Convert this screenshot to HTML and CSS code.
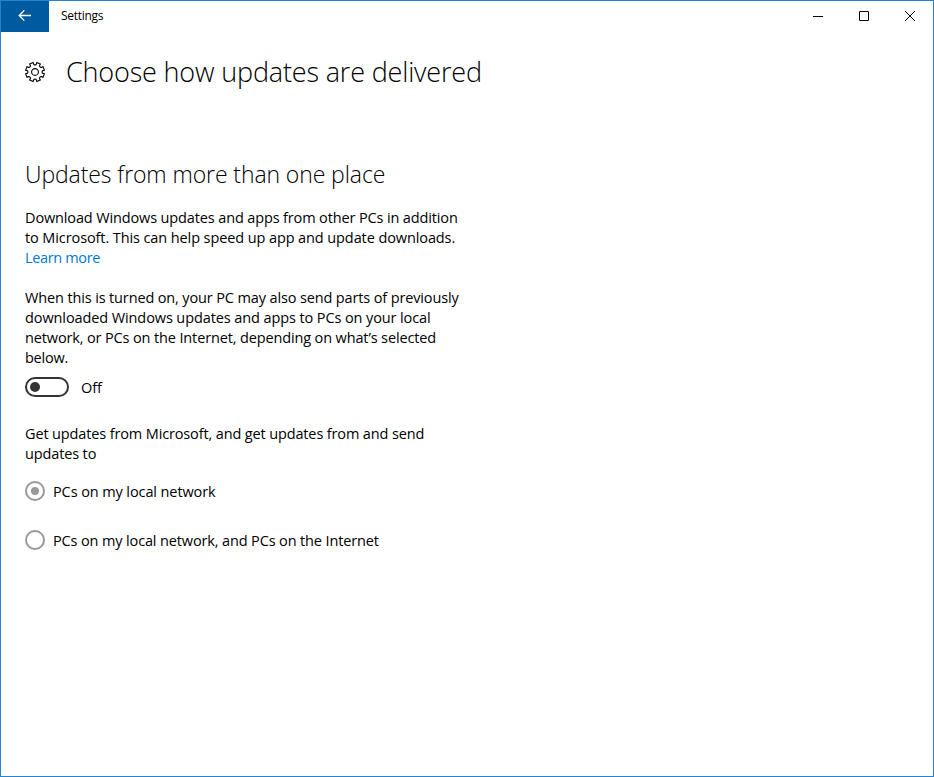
FILE: index.html
```html
<!DOCTYPE html>
<html lang="en">
<head>
<meta charset="utf-8">
<title>Settings</title>
<link rel="stylesheet" href="styles.css">
</head>
<body>
<div class="window">
  <header class="titlebar">
    <button class="back" aria-label="Back"><svg width="14" height="12" viewBox="0 0 14 12"><path d="M13 5.5H1.2M6.3 .4 1.2 5.5l5.1 5.1"/></svg></button>
    <span class="app-name">Settings</span>
    <div class="controls">
      <button aria-label="Minimize"><svg width="12" height="12"><path d="M1 6.5h10"/></svg></button>
      <button aria-label="Maximize"><svg width="12" height="12"><path d="M1.5 1.5h9v9h-9z"/></svg></button>
      <button aria-label="Close"><svg width="12" height="12"><path d="m1 1 10 10M11 1 1 11"/></svg></button>
    </div>
  </header>
  <main>
    <div class="page-head">
      <svg class="gear" width="22" height="22" viewBox="-11 -11 22 22"><path d="M9.41 1.91 8 5.3 5.95 4.4Q4.9 4.9 4.4 5.95L5.3 8 1.91 9.41 1.09 7.32Q0 6.9-1.09 7.32L-1.91 9.41-5.3 8-4.4 5.95Q-4.9 4.9-5.95 4.4L-8 5.3-9.41 1.91-7.32 1.09Q-6.9 0-7.32-1.09L-9.41-1.91-8-5.3-5.95-4.4Q-4.9-4.9-4.4-5.95L-5.3-8-1.91-9.41-1.09-7.32Q0-6.9 1.09-7.32L1.91-9.41 5.3-8 4.4-5.95Q4.9-4.9 5.95-4.4L8-5.3 9.41-1.91 7.32-1.09Q6.9 0 7.32 1.09Z"/><circle r="3.4"/></svg>
      <h1>Choose how updates are delivered</h1>
    </div>
    <h2>Updates from more than one place</h2>
    <p class="intro">Download Windows updates and apps from other PCs in addition<br><span class="loose">to Microsoft. This can help speed up app and update downloads.</span><br><a href="#">Learn more</a></p>
    <p class="detail">When this is turned on, your PC may also send parts of previously<br><span class="loose">downloaded Windows updates and apps to PCs on your local</span><br>network, or PCs on the Internet, depending on what’s selected<br><span class="tight">below.</span></p>
    <div class="switch-row"><span class="switch"></span><span class="label">Off</span></div>
    <p class="sources">Get updates from Microsoft, and get updates from and send<br>updates to</p>
    <label class="option"><span class="radio selected"></span><span class="label loose">PCs on my local network</span></label>
    <label class="option"><span class="radio"></span><span class="label">PCs on my local network, and PCs on the Internet</span></label>
  </main>
</div>
</body>
</html>
```
FILE: styles.css
```css
* { box-sizing: border-box; }
body { margin: 0; background: #fff; color: #000; font: 14.5px/20px "Open Sans", "Noto Sans", sans-serif; letter-spacing: -.135px; }
.window { width: 934px; height: 777px; border: 1px solid #2483d5; background: #fff; overflow: hidden; }
.titlebar { display: flex; height: 31px; }
button { display: flex; align-items: center; justify-content: center; padding: 0; border: 0; background: none; }
svg { display: block; fill: none; stroke: #000; stroke-width: 1; }
.back { width: 48px; height: 31px; padding-bottom: 1px; background: #005a9e; }
.back svg { stroke: #fff; stroke-width: 1.3; }
.app-name { margin-left: 12px; font-size: 12px; line-height: 30px; letter-spacing: -.3px; }
.controls { display: flex; margin-left: auto; }
.controls button { width: 46px; height: 30px; }
main { padding: 0 24px; }
.page-head { display: flex; align-items: center; height: 80px; }
.gear { margin-left: -1px; margin-right: 20px; stroke-width: 1.1; }
h1, h2, p { margin: 0; white-space: nowrap; }
h1 { font-size: 27px; line-height: 36px; font-weight: 300; letter-spacing: -.17px; }
h2 { margin-top: 46px; font-size: 23px; line-height: 32px; font-weight: 300; letter-spacing: -.1px; }
.intro { margin-top: 18px; }
.detail { margin-top: 20px; }
.loose { letter-spacing: -.1px; }
.tight { letter-spacing: -.25px; }
a { color: #0078d7; text-decoration: none; letter-spacing: -.35px; }
.switch-row { display: flex; align-items: center; height: 20px; margin-top: 9px; gap: 12px; }
.switch { width: 44px; height: 20px; border: 2px solid #333; border-radius: 10px; padding: 3px; }
.switch::before { content: ""; display: block; width: 10px; height: 10px; border-radius: 50%; background: #333; }
.label { padding-top: 2px; }
.sources { margin-top: 27px; }
.option { display: flex; align-items: center; height: 20px; margin-top: 17px; gap: 8px; }
.option + .option { margin-top: 29px; }
.radio { width: 20px; height: 20px; border: 2px solid #999; border-radius: 50%; padding: 4px; }
.radio.selected::before { content: ""; display: block; width: 8px; height: 8px; border-radius: 50%; background: #999; }
```
